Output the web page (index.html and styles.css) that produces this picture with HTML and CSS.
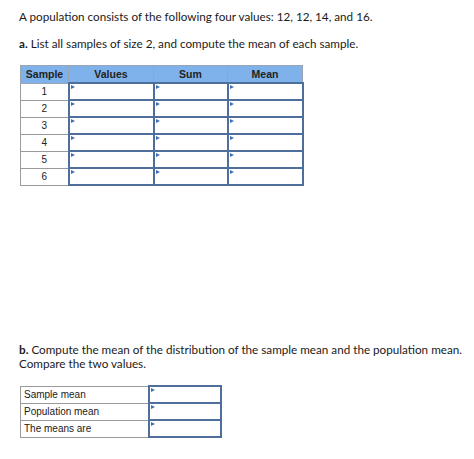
FILE: index.html
```html
<!DOCTYPE html>
<html>
<head>
<meta charset="utf-8">
<link rel="stylesheet" href="styles.css">
</head>
<body>
<div class="page">
  <p class="q">A population consists of the following four values: 12, 12, 14, and 16.</p>
  <p class="q qa"><b>a.</b> List all samples of size 2, and compute the mean of each sample.</p>
  <table class="grid">
    <thead>
      <tr><th class="c1">Sample</th><th class="c2">Values</th><th class="c3">Sum</th><th class="c4">Mean</th></tr>
    </thead>
    <tbody>
      <tr><td class="num">1</td><td class="in"><span class="tri"></span></td><td class="in"><span class="tri"></span></td><td class="in"><span class="tri"></span></td></tr>
      <tr><td class="num">2</td><td class="in"><span class="tri"></span></td><td class="in"><span class="tri"></span></td><td class="in"><span class="tri"></span></td></tr>
      <tr><td class="num">3</td><td class="in"><span class="tri"></span></td><td class="in"><span class="tri"></span></td><td class="in"><span class="tri"></span></td></tr>
      <tr><td class="num">4</td><td class="in"><span class="tri"></span></td><td class="in"><span class="tri"></span></td><td class="in"><span class="tri"></span></td></tr>
      <tr><td class="num">5</td><td class="in"><span class="tri"></span></td><td class="in"><span class="tri"></span></td><td class="in"><span class="tri"></span></td></tr>
      <tr><td class="num">6</td><td class="in"><span class="tri"></span></td><td class="in"><span class="tri"></span></td><td class="in"><span class="tri"></span></td></tr>
    </tbody>
  </table>
  <p class="q qb"><b>b.</b> Compute the mean of the distribution of the sample mean and the population mean.<br>Compare the two values.</p>
  <table class="grid small">
    <tbody>
      <tr><td class="lbl">Sample mean</td><td class="in"><span class="tri"></span></td></tr>
      <tr><td class="lbl">Population mean</td><td class="in"><span class="tri"></span></td></tr>
      <tr><td class="lbl">The means are</td><td class="in"><span class="tri"></span></td></tr>
    </tbody>
  </table>
</div>
</body>
</html>
```
FILE: styles.css
```css
html, body { margin: 0; padding: 0; background: #fff; }
.page {
  padding: 9px 0 0 19px;
  font-family: "Lato", "Open Sans", sans-serif;
  color: #1a1a1a;
}
.q {
  margin: 0;
  font-size: 11.7px;
  line-height: 14px;
  white-space: nowrap;
}
.qa { margin-top: 13px; }
.qb { margin-top: 156px; }
.q b { font-weight: 700; }
.grid {
  border-collapse: collapse;
  font-family: "Liberation Sans", Arial, sans-serif;
  font-size: 10px;
  margin-top: 15px;
  margin-left: 1px;
}
.grid th {
  background: #7fb2ea;
  border: 1px solid #9aa5b3;
  height: 16px;
  padding: 0;
  font-size: 10.5px;
  font-weight: 700;
  color: #222;
}
.c1 { width: 47px; }
.c2 { width: 84px; }
.c3 { width: 73px; }
.c4 { width: 74px; }
.grid td {
  height: 15px;
  padding: 0;
  border: 1px solid #9a9a9a;
}
.grid td.num { text-align: center; color: #222; }
.grid td.in {
  border: 2px solid #4e6f9c;
  position: relative;
  background: #fff;
}
.tri {
  position: absolute;
  left: 1px;
  top: 1px;
  width: 0;
  height: 0;
  border-top: 2px solid transparent;
  border-bottom: 2px solid transparent;
  border-left: 4px solid #3f6fb0;
}
.small { margin-top: 15px; font-size: 10px; }
.small td.lbl { width: 124px; padding-left: 3px; text-align: left; }
.small td.in { width: 70px; }
```
